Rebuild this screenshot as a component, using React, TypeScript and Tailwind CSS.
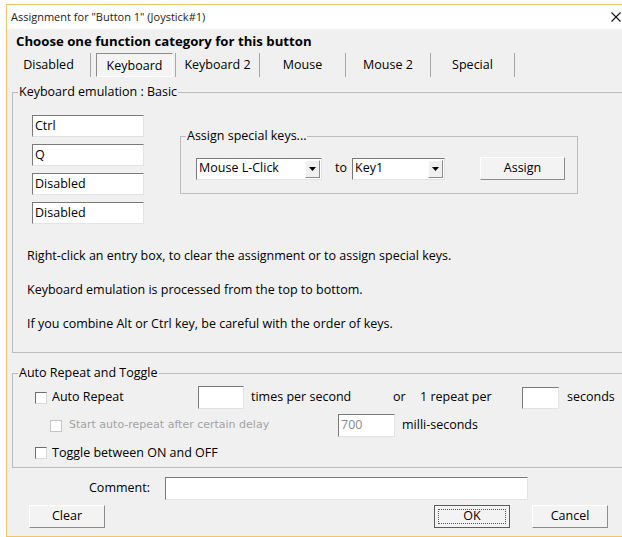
import { ReactNode } from 'react';

const ui = "font-['Open_Sans','Noto_Sans',sans-serif]";

// sunken white entry field
const Entry = ({ text, className = '', dim = false }: { text?: string; className?: string; dim?: boolean }) => (
  <div
    className={`flex items-center bg-white border-t border-l border-t-[#7a7a7a] border-l-[#7a7a7a] border-b border-r border-b-[#e3e3e3] border-r-[#e3e3e3] pl-[2px] text-[12.5px] ${dim ? 'text-[#8a8a8a]' : 'text-black'} ${className}`}
  >
    {text}
  </div>
);

const Check = ({ dim = false }: { dim?: boolean }) => (
  <span
    className={`inline-block w-[12px] h-[12px] bg-white border ${dim ? 'border-[#c4c4c4]' : 'border-t-[#6d6d6d] border-l-[#6d6d6d] border-b-[#d8d8d8] border-r-[#d8d8d8]'}`}
  />
);

const Button = ({ label, className = '', focused = false }: { label: string; className?: string; focused?: boolean }) => (
  <div
    className={`flex items-center justify-center bg-[#f3f3f3] text-[12.5px] border ${
      focused
        ? 'border-[#5a5a5a]'
        : 'border-t-white border-l-white border-b-[#8c8c8c] border-r-[#8c8c8c]'
    } ${className}`}
  >
    {focused ? (
      <span className="flex items-center justify-center w-[calc(100%-6px)] h-[calc(100%-6px)] border border-dotted border-[#555]">
        {label}
      </span>
    ) : (
      label
    )}
  </div>
);

const Combo = ({ text, className = '' }: { text: string; className?: string }) => (
  <div className={`flex items-center bg-white border-t border-l border-t-[#7a7a7a] border-l-[#7a7a7a] border-b border-r border-b-[#e3e3e3] border-r-[#e3e3e3] ${className}`}>
    <span className="flex-1 pl-[2px] text-[12.5px]">{text}</span>
    <span className="flex items-center justify-center w-[15px] h-[18px] mr-[1px] bg-[#f0f0f0] border border-t-white border-l-white border-b-[#8c8c8c] border-r-[#8c8c8c]">
      <svg width="7" height="4" viewBox="0 0 7 4">
        <path d="M0 0h7L3.5 4z" fill="#000" />
      </svg>
    </span>
  </div>
);

const Group = ({ title, className = '', children }: { title: string; className?: string; children: ReactNode }) => (
  <fieldset className={`border border-[#bcbcbc] ${className}`}>
    <legend className="ml-[5px] px-[1px] text-[12.5px] leading-[16px]">{title}</legend>
    {children}
  </fieldset>
);

const Sep = () => <div className="w-px h-[24px] bg-[#a8a8a8]" />;

export default function App() {
  return (
    <div className={`w-[622px] h-[537px] overflow-hidden bg-white pt-[4px] pl-[6px] text-black ${ui}`}>
      <div className="w-[616px] h-[533px] flex flex-col border-l border-t border-b border-[#f2c36b]">
        {/* title bar */}
        <div className="h-[24px] shrink-0 flex items-center justify-between bg-white pl-[4px] pr-[1px]">
          <span className="text-[11px] text-[#222]">Assignment for "Button 1" (Joystick#1)</span>
          <svg width="10" height="10" viewBox="0 0 10 10">
            <path d="M0.5 0.5l9 9M9.5 0.5l-9 9" stroke="#111" strokeWidth="1.1" />
          </svg>
        </div>

        <div className="flex-1 flex flex-col bg-[#f0f0f0]">
          <div className="mt-[3px] ml-[9px] text-[13.2px] leading-[18px] font-bold">
            Choose one function category for this button
          </div>

          {/* category tabs */}
          <div className="mt-[3px] h-[24px] flex items-center text-[12.5px]">
            <div className="w-[83px] text-center">Disabled</div>
            <Sep />
            <div className="w-[84px] h-[24px] pl-[5px]">
              <div className="w-[77px] h-[24px] flex items-center justify-center bg-[#f4f4f4] border border-t-[#8c8c8c] border-l-[#8c8c8c] border-b-white border-r-white pt-[2px]">
                Keyboard
              </div>
            </div>
            <Sep />
            <div className="w-[83px] text-center">Keyboard 2</div>
            <Sep />
            <div className="w-[85px] text-center">Mouse</div>
            <Sep />
            <div className="w-[84px] text-center">Mouse 2</div>
            <Sep />
            <div className="w-[83px] text-center">Special</div>
            <Sep />
          </div>

          <Group title="Keyboard emulation : Basic" className="mt-[7px] ml-[5px] w-[620px] h-[269px]">
            <div className="flex items-start">
              <div className="ml-[19px] mt-[15px] flex flex-col gap-[7px]">
                <Entry text="Ctrl" className="w-[112px] h-[22px]" />
                <Entry text="Q" className="w-[112px] h-[22px]" />
                <Entry text="Disabled" className="w-[112px] h-[22px]" />
                <Entry text="Disabled" className="w-[112px] h-[22px]" />
              </div>

              <Group title="Assign special keys..." className="ml-[36px] mt-[28px] w-[398px] pb-[13px]">
                <div className="mt-[13px] ml-[15px] flex items-center text-[12.5px]">
                  <Combo text="Mouse L-Click" className="w-[126px] h-[22px]" />
                  <span className="ml-[13px]">to</span>
                  <Combo text="Key1" className="ml-[5px] w-[93px] h-[22px]" />
                  <Button label="Assign" className="ml-[35px] w-[85px] h-[23px]" />
                </div>
              </Group>
            </div>

            <div className="ml-[14px] mt-[24px] flex flex-col gap-[18px] text-[12.5px] leading-[16px]">
              <p>Right-click an entry box, to clear the assignment or to assign special keys.</p>
              <p>Keyboard emulation is processed from the top to bottom.</p>
              <p>If you combine Alt or Ctrl key, be careful with the order of keys.</p>
            </div>
          </Group>

          <Group title="Auto Repeat and Toggle" className="mt-[12px] ml-[5px] w-[620px] h-[103px]">
            <div className="mt-[5px] flex items-center text-[12.5px]">
              <label className="ml-[22px] w-[163px] flex items-center gap-[5px]">
                <Check />
                Auto Repeat
              </label>
              <Entry className="w-[46px] h-[23px]" />
              <span className="ml-[7px] w-[142px]">times per second</span>
              <span className="w-[27px]">or</span>
              <span className="w-[102px]">1 repeat per</span>
              <Entry className="w-[37px] h-[22px]" />
              <span className="ml-[8px]">seconds</span>
            </div>
            <div className="mt-[5px] flex items-center text-[12.5px]">
              <label className="ml-[37px] w-[288px] flex items-center gap-[7px] text-[#a3a3a3] font-['DejaVu_Sans',sans-serif] text-[11px]">
                <Check dim />
                Start auto-repeat after certain delay
              </label>
              <Entry text="700" dim className="w-[57px] h-[23px]" />
              <span className="ml-[7px]">milli-seconds</span>
            </div>
            <label className="mt-[8px] ml-[22px] flex items-center gap-[5px] text-[12.5px] leading-[16px]">
              <Check />
              Toggle between ON and OFF
            </label>
          </Group>

          <div className="mt-[9px] flex items-center text-[12.5px]">
            <span className="ml-[82px]">Comment:</span>
            <Entry className="ml-[15px] w-[363px] h-[23px]" />
          </div>

          <div className="mt-[5px] flex items-center">
            <Button label="Clear" className="ml-[22px] w-[76px] h-[23px]" />
            <Button label="OK" focused className="ml-[329px] w-[76px] h-[23px]" />
            <Button label="Cancel" className="ml-[22px] w-[76px] h-[23px]" />
          </div>
        </div>
      </div>
    </div>
  );
}
